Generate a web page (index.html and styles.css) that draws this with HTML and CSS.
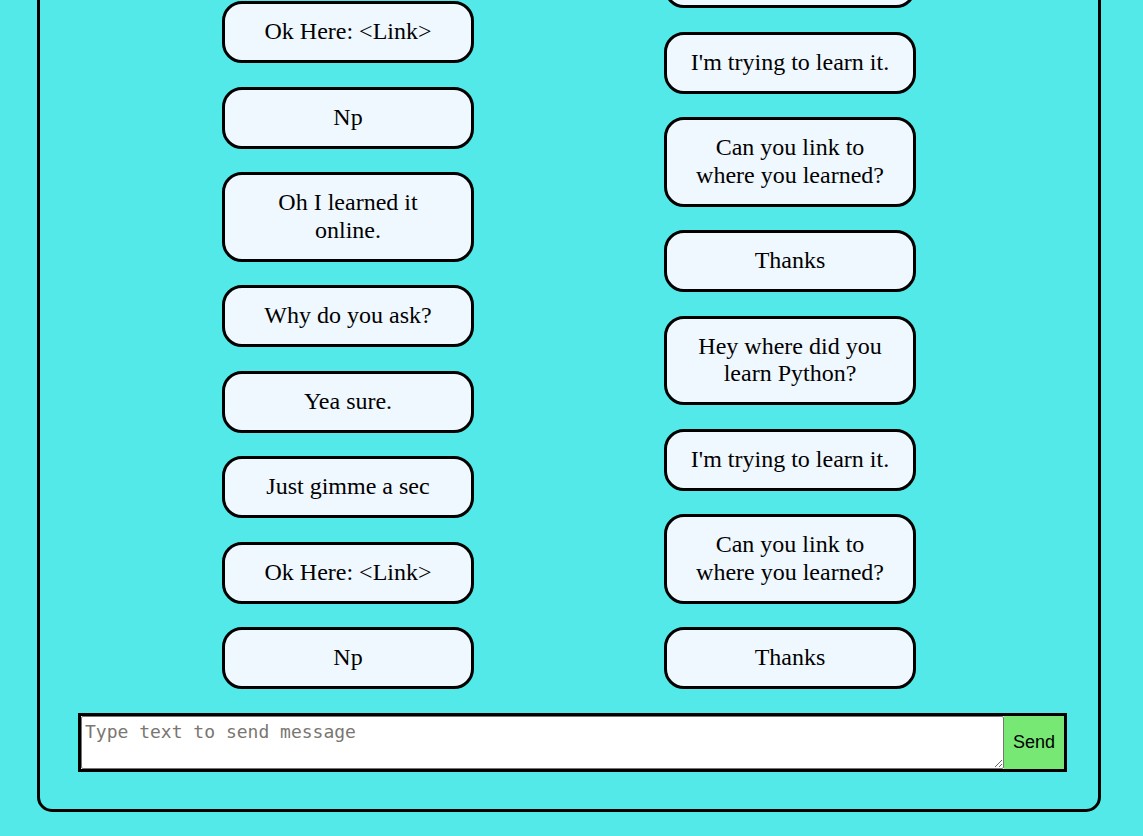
FILE: index.html
```html
<!DOCTYPE html>
<html lang="en">
<head>
<meta charset="utf-8">
<title>Chat</title>
<link rel="stylesheet" href="styles.css">
</head>
<body>
<main class="chat-box">
  <section class="messages">
    <div class="column column-left">
      <p class="bubble">Why do you ask?</p>
      <p class="bubble">Yea sure.</p>
      <p class="bubble">Just gimme a sec</p>
      <p class="bubble">Ok Here: &lt;Link&gt;</p>
      <p class="bubble">Np</p>
      <p class="bubble">Oh I learned it online.</p>
      <p class="bubble">Why do you ask?</p>
      <p class="bubble">Yea sure.</p>
      <p class="bubble">Just gimme a sec</p>
      <p class="bubble">Ok Here: &lt;Link&gt;</p>
      <p class="bubble">Np</p>
    </div>
    <div class="column column-right">
      <p class="bubble">Thanks</p>
      <p class="bubble">Hey where did you learn Python?</p>
      <p class="bubble">I'm trying to learn it.</p>
      <p class="bubble">Can you link to where you learned?</p>
      <p class="bubble">Thanks</p>
      <p class="bubble">Hey where did you learn Python?</p>
      <p class="bubble">I'm trying to learn it.</p>
      <p class="bubble">Can you link to where you learned?</p>
      <p class="bubble">Thanks</p>
    </div>
  </section>
  <form class="composer">
    <textarea class="composer-input" placeholder="Type text to send message"></textarea>
    <button type="button" class="composer-send">Send</button>
  </form>
</main>
</body>
</html>
```
FILE: styles.css
```css
html, body {
  margin: 0;
  padding: 0;
}

body {
  height: 100vh;
  overflow: hidden;
  background: #53e9e8;
  display: flex;
  flex-direction: column;
  justify-content: flex-end;
}

.chat-box {
  flex: none;
  box-sizing: border-box;
  width: 1064px;
  margin: 0 0 24px 37px;
  border: 3px solid #000;
  border-radius: 15px;
  padding: 0 0 37px 0;
  display: flex;
  flex-direction: column;
}

.messages {
  display: flex;
  justify-content: center;
  align-items: flex-end;
  gap: 190px;
}

.column {
  display: flex;
  flex-direction: column;
  gap: 23.5px;
  width: 252px;
}

.bubble {
  box-sizing: border-box;
  width: 252px;
  margin: 0;
  padding: 14.25px 20px;
  border: 3px solid #000;
  border-radius: 20px;
  background: #f0f8ff;
  color: #000;
  font-family: "Liberation Serif", "Times New Roman", serif;
  font-size: 24px;
  line-height: 27.5px;
  text-align: center;
}

.composer {
  display: flex;
  box-sizing: border-box;
  width: 989px;
  margin: 24px 0 0 38px;
  border: 3px solid #000;
  background: #fff;
}

.composer-input {
  flex: 1;
  box-sizing: border-box;
  height: 53px;
  margin: 0;
  padding: 4px 3px 2px;
  border: 1px solid #767676;
  border-radius: 2px;
  font-family: "DejaVu Sans Mono", "Liberation Mono", monospace;
  font-size: 18px;
  line-height: 22px;
  color: #000;
  background: #fff;
}

.composer-input::placeholder {
  color: #7a7670;
}

.composer-send {
  width: 60px;
  margin: 0;
  padding: 0;
  border: none;
  background: #77e874;
  font-family: "Liberation Sans", Arial, sans-serif;
  font-size: 18px;
  color: #000;
}
```
